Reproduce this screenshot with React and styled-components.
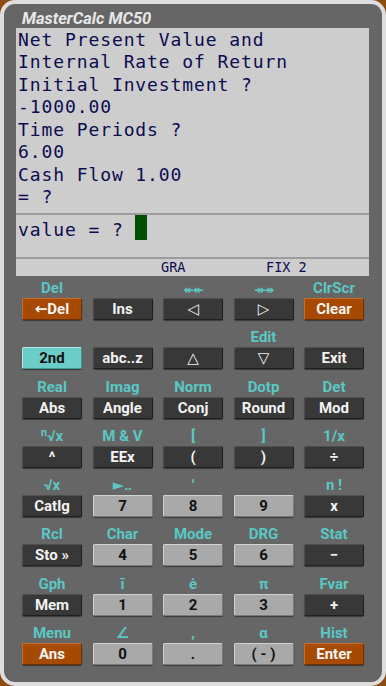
import React from 'react';
import styled, { createGlobalStyle } from 'styled-components';

const GlobalStyle = createGlobalStyle`
  html, body {
    margin: 0;
    padding: 0;
    background: #8f4c10;
  }
  body {
    font-family: Roboto, "Liberation Sans", sans-serif;
  }
`;

const screenLines = [
  'Net Present Value and',
  'Internal Rate of Return',
  'Initial Investment ?',
  '-1000.00',
  'Time Periods ?',
  '6.00',
  'Cash Flow 1.00',
  '= ?',
];

//keys row by row: [shift label, key text, kind, small label]
const keyRows = [
  [['Del', '←Del', 'orange'], ['', 'Ins', 'dark'], ['↞↞', '◁', 'dark', true], ['↠↠', '▷', 'dark', true], ['ClrScr', 'Clear', 'orange']],
  [['', '2nd', 'teal'], ['', 'abc..z', 'dark'], ['', '△', 'dark'], ['Edit', '▽', 'dark'], ['', 'Exit', 'dark']],
  [['Real', 'Abs', 'dark'], ['Imag', 'Angle', 'dark'], ['Norm', 'Conj', 'dark'], ['Dotp', 'Round', 'dark'], ['Det', 'Mod', 'dark']],
  [['ⁿ√x', '^', 'dark'], ['M & V', 'EEx', 'dark'], ['[', '(', 'dark'], [']', ')', 'dark'], ['1/x', '÷', 'dark']],
  [['√x', 'Catlg', 'dark'], ['►‥', '7', 'light'], ["'", '8', 'light'], ['', '9', 'light'], ['n !', 'x', 'dark']],
  [['Rcl', 'Sto »', 'dark'], ['Char', '4', 'light'], ['Mode', '5', 'light'], ['DRG', '6', 'light'], ['Stat', '−', 'dark']],
  [['Gph', 'Mem', 'dark'], ['ī', '1', 'light'], ['ė', '2', 'light'], ['π', '3', 'light'], ['Fvar', '+', 'dark']],
  [['Menu', 'Ans', 'orange'], ['∠', '0', 'light'], [',', '.', 'light'], ['α', '( - )', 'light'], ['Hist', 'Enter', 'orange']],
];

const keyColors = {
  dark: { bg: '#383838', hi: '#4e4e4e', lo: '#1f1f1f', fg: '#f2f2f2' },
  light: { bg: '#a9a9a9', hi: '#d2d2d2', lo: '#7a7a7a', fg: '#111111' },
  orange: { bg: '#a64a02', hi: '#cc6d22', lo: '#6e3000', fg: '#f4f4f4' },
  teal: { bg: '#6ccdc8', hi: '#a9ebe6', lo: '#3f9a95', fg: '#111111' },
};

export default function App() {
  return (
    <>
      <GlobalStyle />
      <Frame>
        <Body>
          <Title>MasterCalc MC50</Title>
          <Screen>
            <Output>
              {screenLines.map((line, idx) => (
                <div key={idx}>{line}</div>
              ))}
            </Output>
            <InputLine>
              value = ? <Cursor />
            </InputLine>
            <StatusBar>
              <span />
              <span>GRA</span>
              <span>FIX 2</span>
            </StatusBar>
          </Screen>

          <Keypad>
            {keyRows.flat().map(([shift, text, kind, small], idx) => (
              <KeyCell key={idx}>
                <ShiftLabel $small={small}>{shift}</ShiftLabel>
                <Key $kind={kind}>{text}</Key>
              </KeyCell>
            ))}
          </Keypad>
        </Body>
      </Frame>
    </>
  );
}

const Frame = styled.div`
  width: 386px;
  height: 686px;
  box-sizing: border-box;
  padding: 4px;
  background: #dedede;
  border-radius: 15px;
`;

const Body = styled.div`
  height: 100%;
  box-sizing: border-box;
  padding: 8px 13px 0 12px;
  background: #666666;
  border-radius: 11px;
  display: flex;
  flex-direction: column;
`;

const Title = styled.div`
  padding-left: 6px;
  font-family: Roboto, "Liberation Sans", sans-serif;
  font-style: italic;
  font-weight: 700;
  font-size: 16.5px;
  line-height: 14px;
  color: #e8e8e8;
`;

const Screen = styled.div`
  margin-top: 2px;
  background: #cdcdcd;
  font-family: "DejaVu Sans Mono", "Liberation Mono", monospace;
  color: #0c0c50;
`;

const Output = styled.div`
  height: 187px;
  box-sizing: border-box;
  padding-top: 0.5px;
  border-bottom: 2px solid #9c9c9c;
  padding-left: 2px;
  font-size: 18px;
  letter-spacing: 0.9px;
  line-height: 22.5px;
  white-space: pre;
  overflow: hidden;
`;

const InputLine = styled.div`
  height: 44px;
  box-sizing: border-box;
  border-bottom: 2px solid #9c9c9c;
  padding-left: 2px;
  font-size: 18px;
  letter-spacing: 0.9px;
  line-height: 22.6px;
  white-space: pre;
`;

const Cursor = styled.span`
  display: inline-block;
  width: 12px;
  height: 25px;
  vertical-align: -4px;
  background: #024d06;
`;

const StatusBar = styled.div`
  height: 17px;
  display: grid;
  grid-template-columns: 145px 105px 1fr;
  font-size: 13.5px;
  line-height: 17px;
`;

const Keypad = styled.div`
  margin-top: 2px;
  padding: 0 5px 0 6px;
  display: grid;
  grid-template-columns: repeat(5, 1fr);
  column-gap: 10.5px;
  row-gap: 7.3px;
`;

const KeyCell = styled.div`
  display: flex;
  flex-direction: column;
`;

const ShiftLabel = styled.div`
  height: 20px;
  text-align: center;
  font-family: Roboto, "DejaVu Sans", sans-serif;
  font-weight: 700;
  font-size: ${p => (p.$small ? '12.5px' : '15px')};
  line-height: ${p => (p.$small ? '24px' : '20px')};
  letter-spacing: ${p => (p.$small ? '-1px' : '0')};
  color: #5ac8c5;
  white-space: nowrap;
`;

const Key = styled.div`
  height: 22px;
  box-sizing: border-box;
  display: flex;
  align-items: center;
  justify-content: center;
  border: 1px solid;
  border-color: ${p => keyColors[p.$kind].hi} ${p => keyColors[p.$kind].lo}
    ${p => keyColors[p.$kind].lo} ${p => keyColors[p.$kind].hi};
  border-radius: 2px;
  background: ${p => keyColors[p.$kind].bg};
  box-shadow: 0 1px 1px rgba(0, 0, 0, 0.45);
  color: ${p => keyColors[p.$kind].fg};
  font-family: Roboto, "DejaVu Sans", sans-serif;
  font-weight: 700;
  font-size: 15px;
  white-space: pre;
`;
